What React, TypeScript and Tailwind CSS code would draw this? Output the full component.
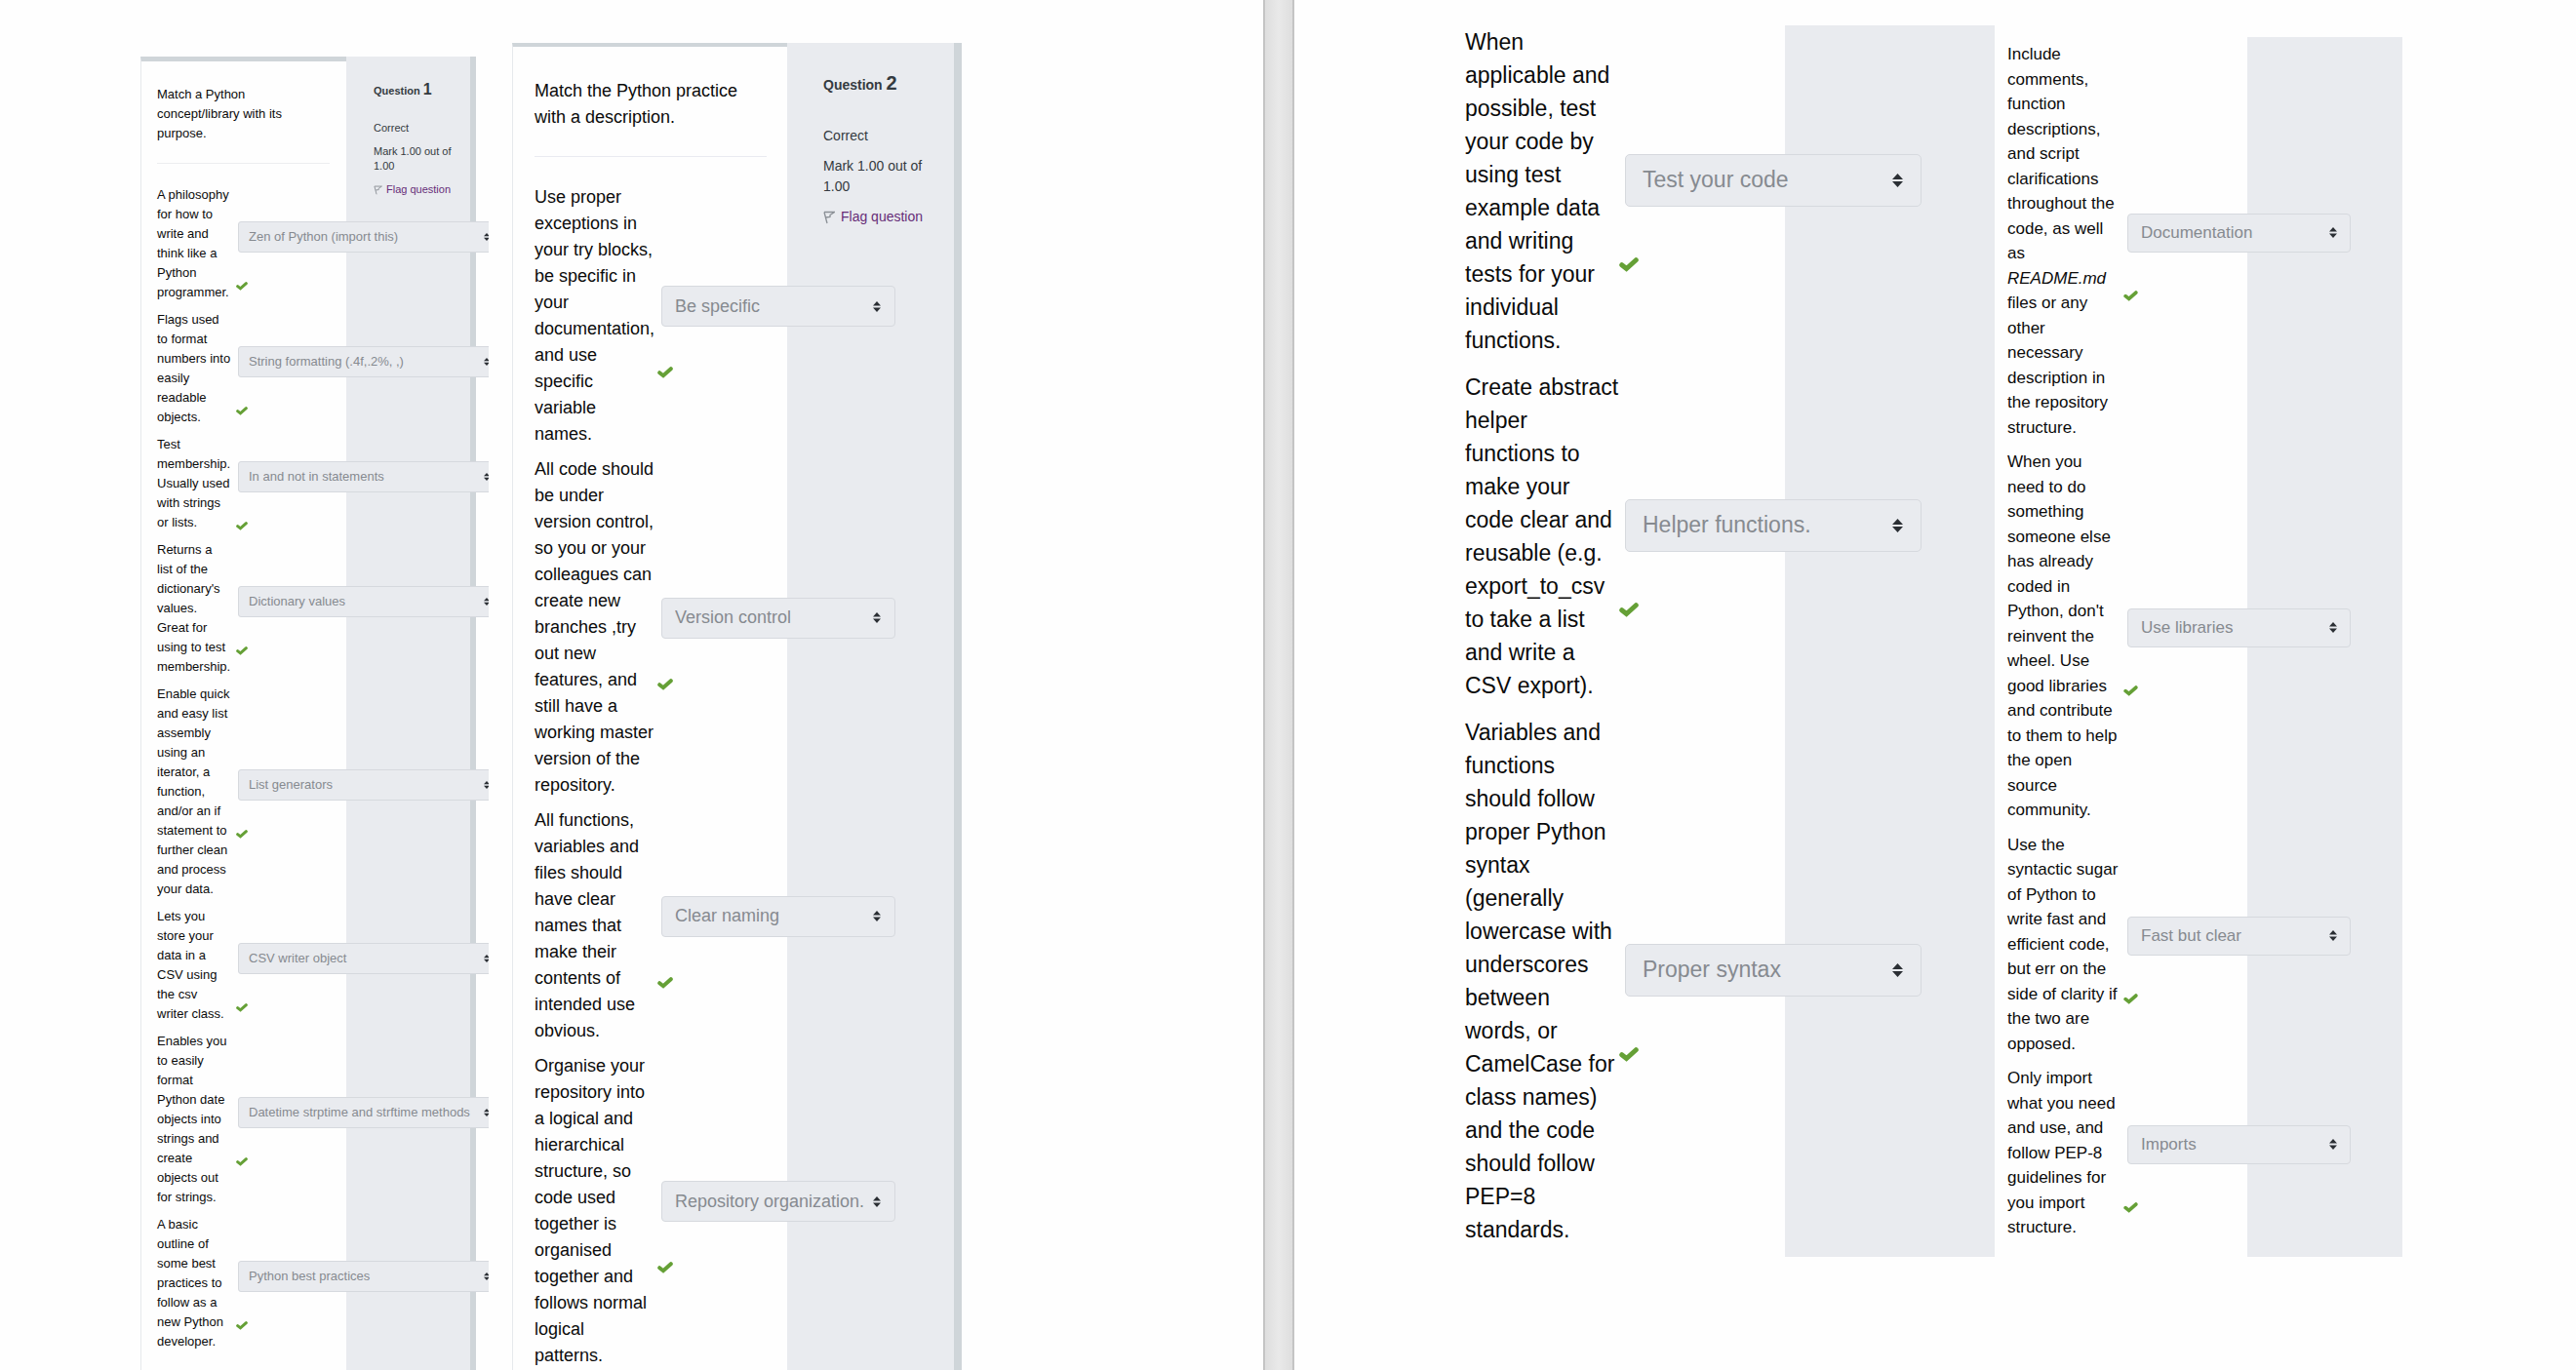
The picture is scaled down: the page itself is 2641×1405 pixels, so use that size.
import { useId, type ReactNode } from "react";

type Match = { text: ReactNode; answer: string };

type Scale = {
  row: string;
  text: string;
  control: string;
  box: string;
  select: string;
  arrow: string;
  check: string;
};

const compact: Scale = {
  row: "pb-2",
  text: "w-[83px] text-[13px] leading-5",
  control: "w-[268px] pt-[25px]",
  box: "mb-[30px]",
  select: "h-8 pl-[10px] pr-5 text-[13px] rounded-[3px]",
  arrow: "right-[10px] h-2 w-[6px]",
  check: "-ml-[2px] h-[9px] w-3",
};

const medium: Scale = {
  row: "pb-[9px]",
  text: "w-[130px] text-[18px] leading-[27px]",
  control: "w-[240px] pt-[33px]",
  box: "mb-[41px]",
  select: "h-[42px] pl-[13px] pr-6 text-[18px] rounded",
  arrow: "right-[15px] h-[11px] w-2",
  check: "-ml-1 h-3 w-4",
};

const large: Scale = {
  row: "pb-[14px] last:pb-[11px]",
  text: "w-[164px] text-[23px] leading-[34px]",
  control: "w-[304px] pt-11",
  box: "mb-[52px]",
  select: "h-[54px] pl-[17px] pr-8 text-[23px] rounded-[5px]",
  arrow: "right-[19px] h-[14px] w-[11px]",
  check: "-ml-[6px] h-[15px] w-5",
};

const regular: Scale = {
  row: "pb-[10px] last:pb-[17px]",
  text: "w-[123px] text-[17px] leading-normal",
  control: "w-[229px] pt-[33px]",
  box: "mb-[39px]",
  select: "h-10 pl-[13px] pr-6 text-[17px] rounded",
  arrow: "right-[14px] h-[11px] w-2",
  check: "-ml-1 h-[11px] w-[15px]",
};

const concepts: Match[] = [
  { text: "A philosophy\nfor how to\nwrite and\nthink like a\nPython\nprogrammer.", answer: "Zen of Python (import this)" },
  { text: "Flags used\nto format\nnumbers into\neasily\nreadable\nobjects.", answer: "String formatting (.4f,.2%, ,)" },
  { text: "Test\nmembership.\nUsually used\nwith strings\nor lists.", answer: "In and not in statements" },
  { text: "Returns a\nlist of the\ndictionary's\nvalues.\nGreat for\nusing to test\nmembership.", answer: "Dictionary values" },
  { text: "Enable quick\nand easy list\nassembly\nusing an\niterator, a\nfunction,\nand/or an if\nstatement to\nfurther clean\nand process\nyour data.", answer: "List generators" },
  { text: "Lets you\nstore your\ndata in a\nCSV using\nthe csv\nwriter class.", answer: "CSV writer object" },
  { text: "Enables you\nto easily\nformat\nPython date\nobjects into\nstrings and\ncreate\nobjects out\nfor strings.", answer: "Datetime strptime and strftime methods" },
  { text: "A basic\noutline of\nsome best\npractices to\nfollow as a\nnew Python\ndeveloper.", answer: "Python best practices" },
];

const practices: Match[] = [
  { text: "Use proper\nexceptions in\nyour try blocks,\nbe specific in\nyour\ndocumentation,\nand use\nspecific\nvariable\nnames.", answer: "Be specific" },
  { text: "All code should\nbe under\nversion control,\nso you or your\ncolleagues can\ncreate new\nbranches ,try\nout new\nfeatures, and\nstill have a\nworking master\nversion of the\nrepository.", answer: "Version control" },
  { text: "All functions,\nvariables and\nfiles should\nhave clear\nnames that\nmake their\ncontents of\nintended use\nobvious.", answer: "Clear naming" },
  { text: "Organise your\nrepository into\na logical and\nhierarchical\nstructure, so\ncode used\ntogether is\norganised\ntogether and\nfollows normal\nlogical\npatterns.", answer: "Repository organization." },
];

const style: Match[] = [
  { text: "When\napplicable and\npossible, test\nyour code by\nusing test\nexample data\nand writing\ntests for your\nindividual\nfunctions.", answer: "Test your code" },
  { text: "Create abstract\nhelper\nfunctions to\nmake your\ncode clear and\nreusable (e.g.\nexport_to_csv\nto take a list\nand write a\nCSV export).", answer: "Helper functions." },
  { text: "Variables and\nfunctions\nshould follow\nproper Python\nsyntax\n(generally\nlowercase with\nunderscores\nbetween\nwords, or\nCamelCase for\nclass names)\nand the code\nshould follow\nPEP=8\nstandards.", answer: "Proper syntax" },
];

const project: Match[] = [
  {
    text: (
      <>
        {"Include\ncomments,\nfunction\ndescriptions,\nand script\nclarifications\nthroughout the\ncode, as well\nas\n"}
        <em>README.md</em>
        {"\nfiles or any\nother\nnecessary\ndescription in\nthe repository\nstructure."}
      </>
    ),
    answer: "Documentation",
  },
  { text: "When you\nneed to do\nsomething\nsomeone else\nhas already\ncoded in\nPython, don't\nreinvent the\nwheel. Use\ngood libraries\nand contribute\nto them to help\nthe open\nsource\ncommunity.", answer: "Use libraries" },
  { text: "Use the\nsyntactic sugar\nof Python to\nwrite fast and\nefficient code,\nbut err on the\nside of clarity if\nthe two are\nopposed.", answer: "Fast but clear" },
  { text: "Only import\nwhat you need\nand use, and\nfollow PEP-8\nguidelines for\nyou import\nstructure.", answer: "Imports" },
];

function Check({ className }: { className: string }) {
  return (
    <svg
      viewBox="0 0 16 12"
      className={`block ${className}`}
      fill="none"
      stroke="#65a036"
      strokeWidth="4"
      strokeLinecap="round"
      strokeLinejoin="miter"
      role="img"
      aria-label="Correct"
    >
      <path d="M2.200 6.200 6 9.200 13.800 2.200" />
    </svg>
  );
}

function Flag({ className }: { className: string }) {
  return (
    <svg viewBox="0 0 12 14" className={className} fill="none" stroke="#8b9096" strokeWidth="1.300" aria-hidden="true">
      <path d="M1 1.500 4 13" />
      <path d="M1 1.500h10.500L7 4.500 7 6.500 2.600 7" />
    </svg>
  );
}

function MatchRow({ match, scale }: { match: Match; scale: Scale }) {
  const id = useId();
  return (
    <div className={`flex items-center ${scale.row}`}>
      <label htmlFor={id} className={`shrink-0 whitespace-pre text-[#0b0b0b] ${scale.text}`}>
        {match.text}
      </label>
      <div className={`shrink-0 ${scale.control}`}>
        <div className={`relative ${scale.box}`}>
          <select
            id={id}
            disabled
            defaultValue={match.answer}
            className={`block w-full appearance-none border border-[#d6d9de] bg-[#e9ebef] text-[#868a90] disabled:opacity-100 ${scale.select}`}
          >
            <option>{match.answer}</option>
          </select>
          <svg
            viewBox="0 0 8 10"
            preserveAspectRatio="none"
            className={`pointer-events-none absolute inset-y-0 my-auto fill-[#2b2f34] ${scale.arrow}`}
            aria-hidden="true"
          >
            <path d="M4 0l4 4.200H0zM0 5.800h8L4 10z" />
          </svg>
        </div>
        <Check className={scale.check} />
      </div>
    </div>
  );
}

function Matches({ items, scale }: { items: Match[]; scale: Scale }) {
  return (
    <div>
      {items.map((match) => (
        <MatchRow key={match.answer} match={match} scale={scale} />
      ))}
    </div>
  );
}

export default function App() {
  return (
    <main className="grid h-screen grid-cols-[1295fr_32px_1314fr] overflow-hidden bg-[#fefefe] font-['Liberation_Sans',Arial,sans-serif]">
      <section className="flex min-w-0 items-stretch gap-6 overflow-hidden pl-36">
        <article className="mt-[58px] flex w-[357px] overflow-hidden">
          <div className="relative w-[211px] shrink-0 border-t-[5px] border-l border-t-[#cfd5d9] border-l-[#e6e9ec] pt-6 pl-4">
            <p className="whitespace-pre text-[13px] leading-5 text-[#0b0b0b]">
              {"Match a Python\nconcept/library with its\npurpose."}
            </p>
            <hr className="mt-5 mr-[17px] mb-[22px] border-[#eceef0]" />
            <Matches items={concepts} scale={compact} />
          </div>
          <aside className="w-[133px] shrink-0 border-r-[6px] border-[#cfd5d9] bg-[#e9ebef] pt-6 pl-7 text-[11px] leading-[15px] text-[#343a40]">
            <h2 className="leading-5 font-bold">
              Question <span className="text-base leading-5">1</span>
            </h2>
            <p className="mt-[21px]">Correct</p>
            <p className="mt-[9px]">Mark 1.00 out of 1.00</p>
            <button type="button" className="mt-[9px] flex items-center gap-1 whitespace-nowrap text-[#662d78]">
              <Flag className="h-[10px] w-[9px]" />
              Flag question
            </button>
          </aside>
        </article>

        <article className="mt-11 flex">
          <div className="relative w-[282px] shrink-0 border-t-4 border-l border-t-[#cfd5d9] border-l-[#e6e9ec] pt-8 pl-[22px]">
            <p className="whitespace-pre text-[18px] leading-[27px] text-[#0b0b0b]">
              {"Match the Python practice\nwith a description."}
            </p>
            <hr className="mt-[26px] mr-[21px] mb-7 border-[#e9ebf1]" />
            <Matches items={practices} scale={medium} />
          </div>
          <aside className="w-[179px] shrink-0 border-r-8 border-[#cfd5d9] bg-[#e9ebef] pt-[29px] pr-4 pl-[37px] text-[14px] leading-[21px] text-[#343a40]">
            <h2 className="leading-6 font-bold">
              Question <span className="text-xl leading-6">2</span>
            </h2>
            <p className="mt-[30px]">Correct</p>
            <p className="mt-[10px]">Mark 1.00 out of 1.00</p>
            <button type="button" className="mt-[10px] flex items-center gap-[6px] whitespace-nowrap text-[#662d78]">
              <Flag className="h-[14px] w-3" />
              Flag question
            </button>
          </aside>
        </article>
      </section>

      <div className="border-x-2 border-[#c4c4c4] bg-linear-to-r from-[#dedede] via-[#e9e9e9] to-[#dedede]" />

      <section className="flex min-w-0 items-start overflow-hidden pl-[158px]">
        <article className="mt-[26px] flex">
          <div className="relative w-[345px] shrink-0 pl-[17px]">
            <Matches items={style} scale={large} />
          </div>
          <div className="w-[215px] shrink-0 bg-[#e9ebef]" />
        </article>
        <article className="mt-[38px] flex">
          <div className="relative w-[259px] shrink-0 pt-[5px] pl-[13px]">
            <Matches items={project} scale={regular} />
          </div>
          <div className="w-[159px] shrink-0 bg-[#e9ebef]" />
        </article>
      </section>
    </main>
  );
}
